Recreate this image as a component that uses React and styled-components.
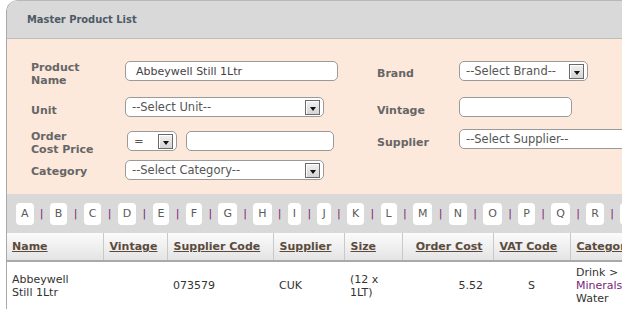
import React from 'react';
import styled, { createGlobalStyle } from 'styled-components';

const Global = createGlobalStyle`
  html, body { margin: 0; padding: 0; background: #fff; overflow: hidden; }
  body { font-family: "DejaVu Sans", Verdana, sans-serif; font-size: 11px; color: #333; }
`;

const Panel = styled.div`
  margin-left: 6px;
  width: 760px;
  border-left: 1px solid #a9a9a9;
  border-top: 1px solid #b8b8b8;
  border-top-left-radius: 12px;
  overflow: hidden;
`;

const Header = styled.div`
  height: 37px;
  background: #d9d9d9;
  border-bottom: 1px solid #bdbdbd;
  display: flex;
  align-items: center;
  padding-left: 20px;
  font-family: "DejaVu Sans Condensed", "DejaVu Sans", sans-serif;
  font-weight: bold;
  font-size: 11px;
  color: #4e5a66;
`;

const Form = styled.div`
  background: #fde9dc;
  padding: 20px 0 11px 24px;
  display: grid;
  grid-template-columns: 94px 252px 82px auto;
  grid-template-rows: 30px 28px 28px 20px;
  row-gap: 6px;
  align-items: center;
`;

const Label = styled.div`
  font-weight: bold;
  font-size: 11px;
  line-height: 13px;
  color: #666;
  margin: ${p => p.$dy || 0}px 0 ${p => -(p.$dy || 0)}px;
`;

const Field = styled.div`
  display: flex;
  align-items: center;
  gap: 9px;
  margin: ${p => p.$dy || 0}px 0 ${p => -(p.$dy || 0)}px;
`;

const TextInput = styled.div`
  box-sizing: border-box;
  width: ${p => p.$w}px;
  height: 20px;
  background: #fff;
  border: 1px solid #9a9a9a;
  border-radius: 5px;
  padding-left: 10px;
  display: flex;
  align-items: center;
  color: #444;
  font-size: 11px;
  white-space: nowrap;
`;

const Select = styled.div`
  box-sizing: border-box;
  width: ${p => p.$w}px;
  height: 20px;
  margin-left: ${p => p.$ml || 0}px;
  background: #fff;
  border: 1px solid #9a9a9a;
  border-radius: 5px;
  padding: 0 3px 0 6px;
  display: flex;
  align-items: center;
  justify-content: space-between;
  color: #555;
  font-size: 11.5px;
  white-space: nowrap;
  flex-shrink: 0;
`;

const ArrowBox = styled.span`
  box-sizing: border-box;
  width: 15px;
  height: 15px;
  border: 1px solid #6a6a6a;
  background: linear-gradient(#f2f2f2, #d4d4d4);
  box-shadow: inset 1px 1px 0 #fff;
  display: flex;
  align-items: center;
  justify-content: center;
  padding-top: 3px;
  flex-shrink: 0;
  &::after {
    content: "";
    border-left: 3.5px solid transparent;
    border-right: 3.5px solid transparent;
    border-top: 4px solid #111;
  }
`;

const LetterBar = styled.div`
  height: 39px;
  background: #d9d9d9;
  display: flex;
  align-items: center;
  padding-left: 9px;
  white-space: nowrap;
`;

const LetterBtn = styled.span`
  box-sizing: border-box;
  height: 22px;
  padding: 0 5px;
  background: #fff;
  border-radius: 4px;
  display: inline-flex;
  align-items: center;
  justify-content: center;
  color: #5a5a5a;
  font-size: 11px;
  flex-shrink: 0;
`;

const Sep = styled.span`
  color: #7a1f7a;
  margin: 0 6.3px;
  font-size: 11px;
  flex-shrink: 0;
`;

const Table = styled.table`
  border-collapse: collapse;
  table-layout: fixed;
  width: 740px;
`;

const Th = styled.th`
  height: 27px;
  padding: 0 ${p => (p.$right ? 10 : 6)}px 0 ${p => (p.$first ? 5 : 6)}px;
  text-align: ${p => (p.$right ? 'right' : 'left')};
  background: linear-gradient(#fbfbfb, #e4e4e4);
  border-bottom: 2px solid #a9a9a9;
  border-right: 1px solid #c9c9c9;
  font-weight: bold;
  font-size: 11px;
  color: #5b4b3d;
  text-decoration: underline;
  white-space: nowrap;
  overflow: hidden;
`;

const Td = styled.td`
  padding: 4px ${p => (p.$right ? 10 : p.$first ? 18 : 6)}px 4px ${p => (p.$first ? 5 : 6)}px;
  line-height: 13px;
  font-size: 11px;
  color: #333;
  text-align: ${p => p.$align || 'left'};
  vertical-align: middle;
`;

const Link = styled.span`
  color: #7a1f7a;
`;

const letters = 'ABCDEFGHIJKLMNOPQRSTUVWXYZ'.split('');

const columns = [
  { name: 'Name', w: 96, first: true },
  { name: 'Vintage', w: 64 },
  { name: 'Supplier Code', w: 106 },
  { name: 'Supplier', w: 71 },
  { name: 'Size', w: 58 },
  { name: 'Order Cost', w: 91, right: true },
  { name: 'VAT Code', w: 77 },
  { name: 'Category', w: 66 },
  { name: 'Actions', w: 111 },
];

export default function App() {
  return (
    <>
      <Global />
      <Panel>
        <Header>Master Product List</Header>
        <Form>
          <Label>Product<br />Name</Label>
          <Field $dy={-3}>
            <TextInput $w={213}>Abbeywell Still 1Ltr</TextInput>
          </Field>
          <Label $dy={-1}>Brand</Label>
          <Field $dy={-3}>
            <Select $w={129}>--Select Brand--<ArrowBox /></Select>
          </Field>

          <Label $dy={1}>Unit</Label>
          <Field $dy={-2}>
            <Select $w={199}>--Select Unit--<ArrowBox /></Select>
          </Field>
          <Label $dy={1}>Vintage</Label>
          <Field $dy={-2}>
            <TextInput $w={113} />
          </Field>

          <Label>Order<br />Cost Price</Label>
          <Field $dy={-2}>
            <Select $w={50} $ml={2}>=<ArrowBox /></Select>
            <TextInput $w={148} />
          </Field>
          <Label $dy={-1}>Supplier</Label>
          <Field $dy={-4}>
            <Select $w={200}>--Select Supplier--</Select>
          </Field>

          <Label $dy={-2}>Category</Label>
          <Field $dy={-3}>
            <Select $w={199}>--Select Category--<ArrowBox /></Select>
          </Field>
          <div />
          <div />
        </Form>
        <LetterBar>
          {letters.map((l, i) => (
            <React.Fragment key={l}>
              {i > 0 && <Sep>|</Sep>}
              <LetterBtn>{l}</LetterBtn>
            </React.Fragment>
          ))}
        </LetterBar>
        <Table>
          <colgroup>
            {columns.map(c => (
              <col key={c.name} style={{ width: c.w }} />
            ))}
          </colgroup>
          <thead>
            <tr>
              {columns.map(c => (
                <Th key={c.name} $right={c.right} $first={c.first}>{c.name}</Th>
              ))}
            </tr>
          </thead>
          <tbody>
            <tr>
              <Td $first>Abbeywell Still 1Ltr</Td>
              <Td></Td>
              <Td>073579</Td>
              <Td>CUK</Td>
              <Td>(12 x 1LT)</Td>
              <Td $align="right" $right>5.52</Td>
              <Td $align="center">S</Td>
              <Td>Drink &gt; <Link>Minerals</Link> Water</Td>
              <Td></Td>
            </tr>
          </tbody>
        </Table>
      </Panel>
    </>
  );
}
